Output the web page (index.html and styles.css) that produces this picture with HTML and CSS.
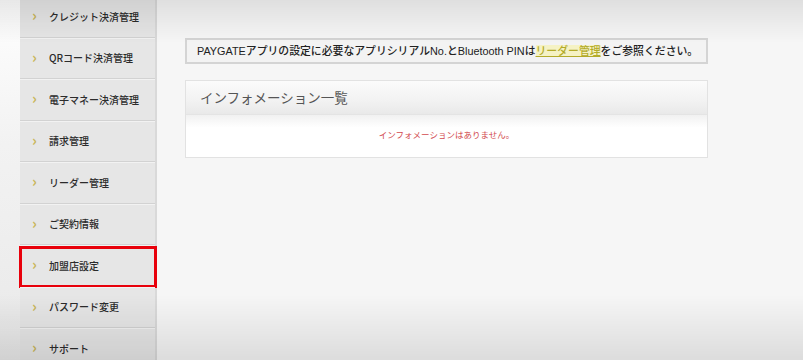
FILE: index.html
```html
<!DOCTYPE html>
<html lang="ja">
<head>
    <meta charset="UTF-8">
    <meta name="viewport" content="width=device-width, initial-scale=1.0">
    <title>加盟店管理</title>
    <link rel="stylesheet" href="styles.css">
</head>
<body>
    <div class="page">
        <div class="edge"></div>

        <ul class="side-menu">
            <li class="menu-item"><span class="chev">&#x203A;</span>クレジット決済管理</li>
            <li class="menu-item"><span class="chev">&#x203A;</span>QRコード決済管理</li>
            <li class="menu-item"><span class="chev">&#x203A;</span>電子マネー決済管理</li>
            <li class="menu-item"><span class="chev">&#x203A;</span>請求管理</li>
            <li class="menu-item"><span class="chev">&#x203A;</span>リーダー管理</li>
            <li class="menu-item"><span class="chev">&#x203A;</span>ご契約情報</li>
            <li class="menu-item marked"><span class="chev">&#x203A;</span>加盟店設定</li>
            <li class="menu-item"><span class="chev">&#x203A;</span>パスワード変更</li>
            <li class="menu-item"><span class="chev">&#x203A;</span>サポート</li>
        </ul>

        <div class="main">
            <p class="notice">PAYGATEアプリの設定に必要なアプリシリアルNo.とBluetooth PINは<a href="#">リーダー管理</a>をご参照ください。</p>

            <div class="panel">
                <div class="panel-head">インフォメーション一覧</div>
                <div class="panel-body">インフォメーションはありません。</div>
            </div>
        </div>
    </div>
    <div class="vignette"></div>
</body>
</html>
```

FILE: styles.css
```css
:root {
    --bg: #f6f6f6;
    --side: #e6e6e6;
    --line: #d2d2d2;
    --text: #2b2b2b;
    --olive: #c9b65a;
    --red: #e8000b;
}

body {
    margin: 0;
    background: var(--bg);
    font-family: "Noto Sans CJK JP", "Noto Sans", sans-serif;
    color: var(--text);
    height: 360px;
    overflow: hidden;
}

.page {
    display: flex;
    height: 360px;
}

.edge {
    width: 20px;
    flex-shrink: 0;
    background: linear-gradient(180deg, #ffffff 0%, #f2f2f2 40%, #e9e9e9 100%);
}

.side-menu {
    list-style: none;
    margin: -4px 0 0 0;
    padding: 0;
    width: 135px;
    flex-shrink: 0;
    background: var(--side);
    border-right: 2px solid #d9d9d9;
}

.menu-item {
    position: relative;
    height: 41.5px;
    box-sizing: border-box;
    display: flex;
    align-items: center;
    padding-left: 12px;
    font-size: 10px;
    font-weight: 500;
    border-bottom: 1px solid var(--line);
    box-shadow: inset 0 1px 0 #f2f2f2;
}

.chev {
    color: var(--olive);
    font-size: 15px;
    font-weight: 700;
    width: 17px;
    line-height: 1;
    margin-top: -3px;
}

.menu-item.marked::after {
    content: "";
    position: absolute;
    left: -1px;
    right: -2px;
    top: 1px;
    bottom: -2px;
    border: 3px solid var(--red);
}

.main {
    flex: 1;
    padding: 38px 95px 0 28px;
}

.notice {
    margin: 0 0 16px;
    height: 26px;
    box-sizing: border-box;
    border: 2px solid #d4d4d4;
    background: #f3f3f3;
    font-family: "Liberation Sans", "Noto Sans CJK JP", sans-serif;
    font-size: 10.85px;
    font-weight: 500;
    line-height: 22px;
    padding-left: 10px;
    color: #222;
    white-space: nowrap;
}

.notice a {
    color: #b3ab2a;
    text-decoration: underline;
    background: #f5f2c4;
}

.panel {
    border: 1px solid #e2e2e2;
    background: #fff;
}

.panel-head {
    height: 33px;
    line-height: 33px;
    padding-left: 14px;
    font-size: 13.5px;
    color: #555;
    background: linear-gradient(180deg, #fbfbfb 0%, #f2f2f2 60%, #e9e9e9 100%);
    border-bottom: 1px solid #e4e4e4;
}

.panel-body {
    height: 42px;
    line-height: 38px;
    text-align: center;
    font-size: 8.5px;
    color: #d2494e;
    background: linear-gradient(180deg, #f1f1f1 0%, #ffffff 30%);
}

.vignette {
    position: fixed;
    inset: 0;
    pointer-events: none;
    background:
        linear-gradient(180deg, rgba(0, 0, 0, 0.09) 0%, rgba(0, 0, 0, 0) 12%),
        linear-gradient(0deg, rgba(0, 0, 0, 0.1) 0%, rgba(0, 0, 0, 0) 18%);
}
```
